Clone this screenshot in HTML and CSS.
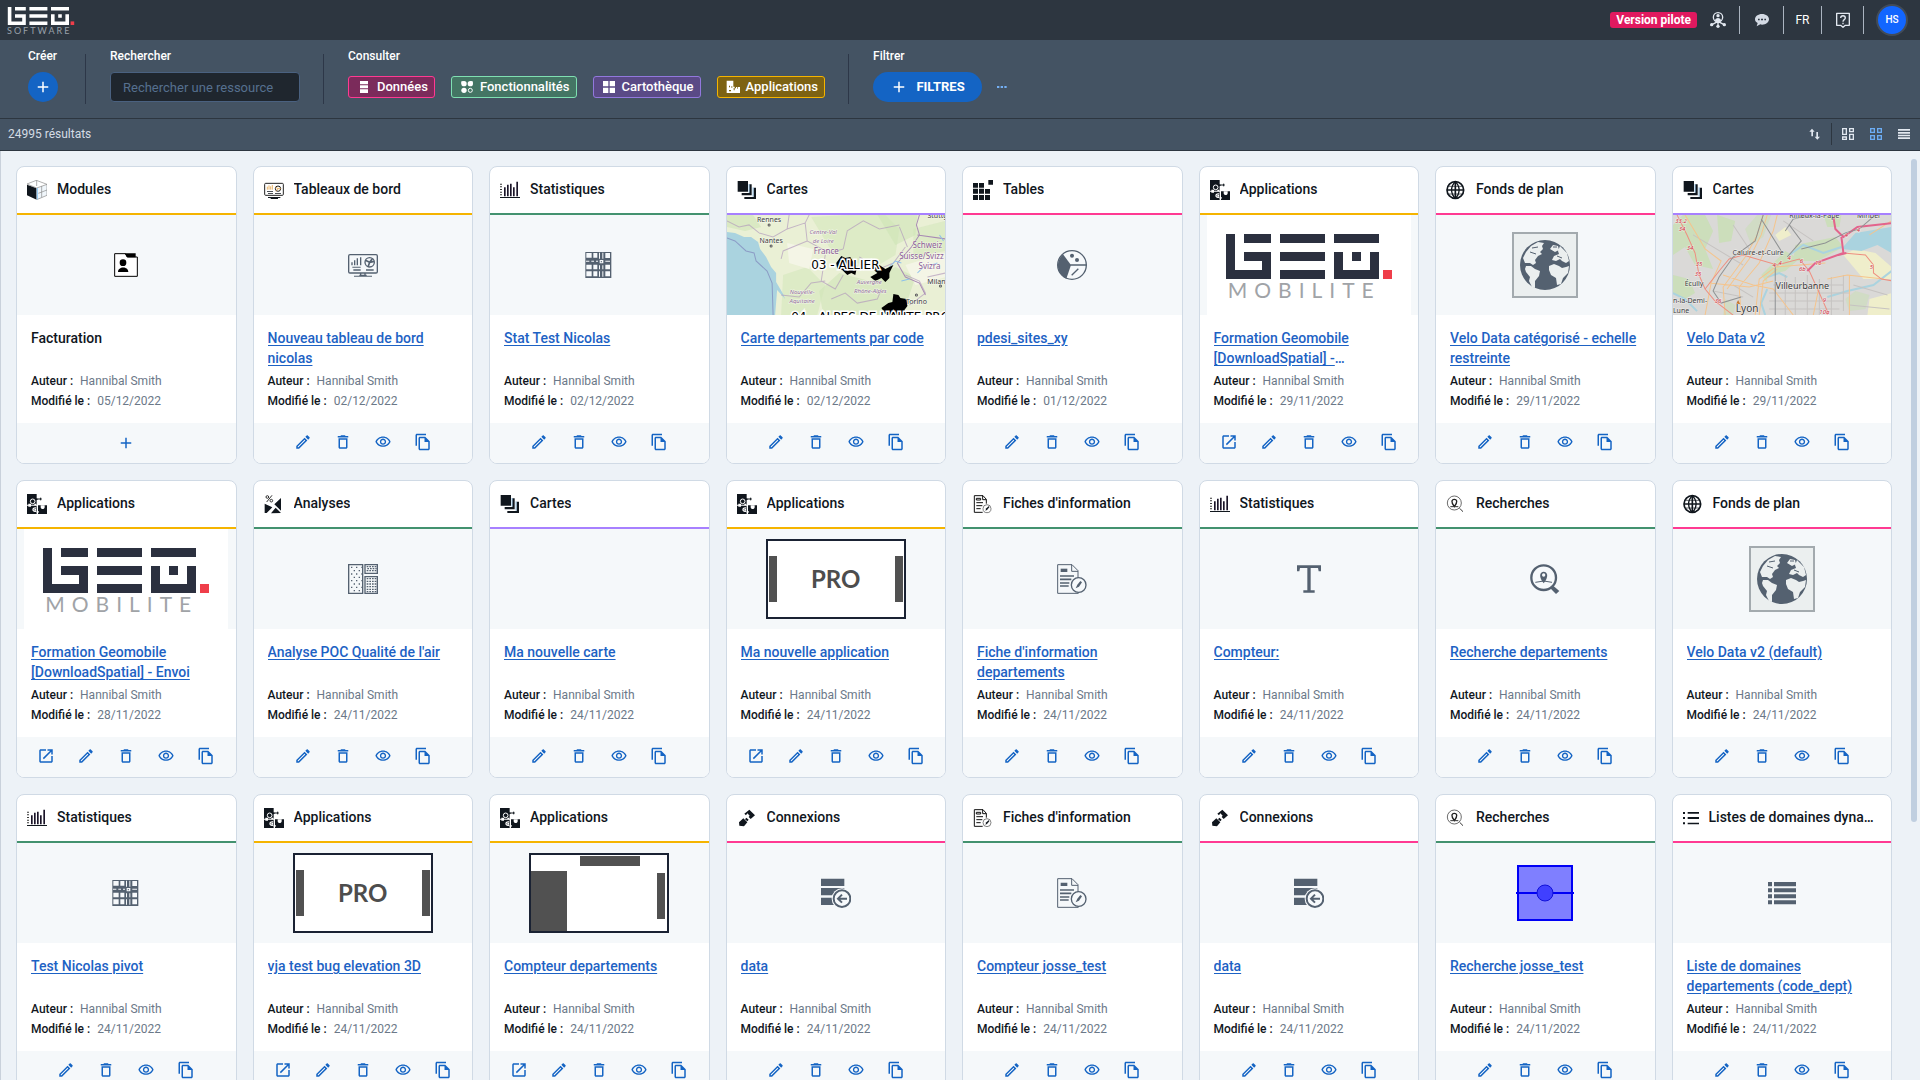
FILE: index.html
```html
<!DOCTYPE html>
<html lang="fr">
<head>
<meta charset="utf-8">
<meta name="viewport" content="width=device-width, initial-scale=1">
<title>GEO Software</title>
<link rel="stylesheet" href="styles.css">
</head>
<body>
<svg class="sprite" aria-hidden="true">
  <!-- brand -->
  <symbol id="geo" viewBox="0 0 166 45"><path fill="currentColor" d="M0 0h9v36h27v-9H18v-9h27v27H0zM18 0h27v9H18zM54 0h45v9H54zM54 18h45v9H54zM54 36h45v9H54zM108 0h45v9h-45zM108 18h9v18h27V18h9v27h-45zM126 18h9v9h-9z"/><path fill="#ef3e4a" d="M157 36h9v9h-9z"/></symbol>
  <!-- actions -->
  <symbol id="plus" viewBox="0 0 24 24"><path d="M19 13h-6v6h-2v-6H5v-2h6V5h2v6h6z"/></symbol>
  <symbol id="edit" viewBox="0 0 24 24"><path d="M14.06 9.02l.92.92L5.92 19H5v-.92l9.06-9.06M17.66 3c-.25 0-.51.1-.7.29l-1.83 1.83 3.75 3.75 1.83-1.83c.39-.39.39-1.02 0-1.41l-2.34-2.34c-.2-.2-.45-.29-.71-.29zm-3.6 3.19L3 17.25V21h3.75L17.81 9.94l-3.75-3.75z"/></symbol>
  <symbol id="trash" viewBox="0 0 24 24"><path d="M6 19c0 1.1.9 2 2 2h8c1.1 0 2-.9 2-2V7H6v12zM8 9h8v10H8V9zm7.5-5l-1-1h-5l-1 1H5v2h14V4z"/></symbol>
  <symbol id="eye" viewBox="-1 -1 26 26"><path d="M12 6c3.79 0 7.17 2.13 8.82 5.5C19.17 14.87 15.79 17 12 17s-7.17-2.13-8.82-5.5C4.83 8.13 8.21 6 12 6m0-2C7 4 2.73 7.11 1 11.5 2.73 15.89 7 19 12 19s9.27-3.11 11-7.5C21.27 7.11 17 4 12 4zm0 5c1.38 0 2.5 1.12 2.5 2.5S13.38 14 12 14s-2.5-1.12-2.5-2.5S10.62 9 12 9m0-2c-2.48 0-4.5 2.02-4.5 4.5S9.52 16 12 16s4.5-2.02 4.5-4.5S14.48 7 12 7z"/></symbol>
  <symbol id="copy" viewBox="0 0 24 24"><path d="M16 1H4c-1.1 0-2 .9-2 2v14h2V3h12V1zm-1 4H8c-1.1 0-1.99.9-1.99 2L6 21c0 1.1.89 2 1.99 2H19c1.1 0 2-.9 2-2V11l-6-6zM8 21V7h6v5h5v9H8z"/></symbol>
  <symbol id="open" viewBox="0 0 24 24"><path d="M19 19H5V5h7V3H5c-1.11 0-2 .9-2 2v14c0 1.1.89 2 2 2h14c1.1 0 2-.9 2-2v-7h-2v7zM14 3v2h3.59l-9.83 9.83 1.41 1.41L19 6.41V10h2V3h-7z"/></symbol>
  <!-- card types -->
  <symbol id="t-module" viewBox="0 0 60 60"><path d="M0 14l29 11v34L0 46z"/><path d="M29 24l31-10v32L29 60z" fill="#f0f6fb"/><path d="M0 12L28 1l32 12v33L29 59M29 24l31-11M29 24L0 12M29 0v18M44 18v34M34 40l26-10" fill="none" stroke="#888" stroke-width="2"/><path d="M31 24v34" stroke="#8cc8f5" stroke-width="3"/></symbol>
  <symbol id="t-board" viewBox="0 0 60 60"><rect x="2" y="10" width="56" height="36" rx="3" fill="none" stroke="#222" stroke-width="3"/><path d="M10 29V20M15 29V16M20 29V19M25 29V15" stroke="#e09020" stroke-width="2"/><path d="M9 33h18v2H9zM12 39h15v2H12zM33 39h18v2H33zM12 51h37v3H12zM20 54h22v3H20z"/><circle cx="42" cy="26" r="8" fill="none" stroke="#222" stroke-width="3"/><path d="M42 26l-8-5M42 26h9M42 26l-6 8" stroke="#e09020" stroke-width="2"/></symbol>
  <symbol id="t-stat" viewBox="0 0 60 60"><path d="M0 51h60v3H0z"/><path d="M3 11v38" stroke="#111" stroke-width="5" stroke-dasharray="3 5"/><path d="M12 22h5v27h-5zM21 14h5v35h-5zM30 11h5v38h-5zM39 22h5v27h-5zM49 5h5v44h-5z" fill="#1a1428"/></symbol>
  <symbol id="t-layers" viewBox="0 0 60 60"><path d="M2 3h31v32H2zM37 13h7v33H14v-7h23zM50 23h7v34H22v-6h28z"/><path d="M36 12v26M48 22v28" stroke="#6aaede" stroke-width="2"/></symbol>
  <symbol id="t-table" viewBox="0 0 60 60"><path d="M0 9h15v14H0zM18 9h15v14H18zM0 26h15v15H0zM18 26h15v15H18zM36 27h15v14H36zM0 45h15v15H0zM18 45h15v15H18zM36 45h15v15H36zM46 0h14v14H46z"/></symbol>
  <symbol id="t-app" viewBox="0 0 60 60"><path d="M0 0h29v13l4 3-4 3v13H0zM0 35h29v25H0zM33 34h27v26H33z"/><path d="M29 15h15M41 11v8" stroke="#10161d" stroke-width="3"/><circle cx="17" cy="22" r="7" fill="none" stroke="#fff" stroke-width="3"/><path d="M4 29h8v9H4zM22 29h6v5h-6zM41 34h12v6c0 7-12 7-12 0zM29 51h6v5h-6z" fill="#fff"/><path d="M27 42c-12-3-12 13 0 9M27 47h-5" fill="none" stroke="#fff" stroke-width="4"/></symbol>
  <symbol id="t-globe" viewBox="0 0 60 60"><g fill="none" stroke="#10161d" stroke-width="4"><circle cx="28" cy="30" r="25" stroke-width="5"/><path d="M3 30h50M28 5v50" stroke-width="5"/><path d="M28 5c-15 14-15 36 0 50M28 5c15 14 15 36 0 50"/><path d="M8 19h40M8 42h40" stroke-width="2"/></g></symbol>
  <symbol id="t-analysis" viewBox="0 0 60 60"><path d="M2 29l23 11-17 17H2zM21 58l14-17 16 16zM51 12v38L31 31z"/><path d="M24 4L8 24" stroke="#333" stroke-width="3"/><circle cx="10" cy="9" r="4" fill="none" stroke="#333" stroke-width="3"/><circle cx="22" cy="20" r="4" fill="none" stroke="#333" stroke-width="3"/></symbol>
  <symbol id="t-sheet" viewBox="0 0 60 60"><path d="M30 5H4v50h25M30 5l10 11v13M29 5v12h11M10 13h13v5H10z" fill="none" stroke="#111" stroke-width="3"/><path d="M10 26h20M10 35h18M10 44h13" stroke="#111" stroke-width="3"/><circle cx="42" cy="44" r="12" fill="#fff" stroke="#444" stroke-width="2"/><path d="M37 50l3-7 8-7 1 4-7 8z"/></symbol>
  <symbol id="t-link" viewBox="0 0 60 60"><path d="M22 17L37 5l17 17-13 11-6-6 3-4-7-7-4 6zM19 31l12 12-10 12-14-2-1-10zM28 29l7 6-4 5-7-6z"/></symbol>
  <symbol id="t-search" viewBox="0 0 60 60"><circle cx="25" cy="27" r="21" fill="none" stroke="#222" stroke-width="2"/><path d="M25 38c-11-14-8-22 0-22s11 8 0 22z" fill="none" stroke="#222" stroke-width="4"/><path d="M13 38h24M41 43l10 10" stroke="#333" stroke-width="3"/></symbol>
  <symbol id="t-list" viewBox="0 0 48 48"><path d="M0 6h6v6H0zM0 21h6v6H0zM0 37h6v6H0zM14 6h34v5H14zM14 21h34v6H14zM14 38h34v5H14z"/></symbol>
  <!-- preview glyphs -->
  <symbol id="p-folder" viewBox="0 0 72 72"><path d="M0 0h32l7 12h33v60H0z" fill="#fff"/><path d="M32 1h33v12H39zM27 19a10 10 0 1 1 0 20a10 10 0 1 1 0-20zM12 57c0-18 31-18 31 0z"/><path d="M2 2h32l6 10h30v58H2z" fill="none" stroke="#000" stroke-width="3"/></symbol>
  <symbol id="p-board" viewBox="0 0 90 90"><rect x="2" y="14" width="86" height="55" rx="4" fill="none" stroke="currentColor" stroke-width="4"/><path d="M10 37h4v9h-4zM18 31h4v15h-4zM26 25h4v21h-4zM36 22h4v24h-4zM13 50h25v3H13zM16 58h22v4H16zM54 58h23v4H54zM36 69h4v6h-4zM49 69h4v6h-4zM34 74h22v4H34zM18 77h54v3H18z"/><circle cx="65" cy="37" r="14" fill="none" stroke="currentColor" stroke-width="4"/><path d="M65 37l-13-6M65 37l13-3M65 37l-5 14M65 37l8-11" stroke="currentColor" stroke-width="5"/></symbol>
  <symbol id="p-pivot" viewBox="-4 -6 90 90"><path d="M0 0h78v78H0z"/><path fill="#f6f9fb" d="M3 3h16v14H3zM24 3h12v14H24zM60 3h14v15H60zM41 2h3v18h-3zM51 2h3v18h-3zM3 38h16v14H3zM24 38h12v14H24zM60 38h14v14H60zM3 58h16v15H3zM24 58h12v15H24zM60 58h14v15H60zM43 24h11v10H43zM2 26h10v3H2zM18 26h8v3h-8zM32 26h6v3h-6zM60 26h14v3H60zM41 40h3v12h-3zM51 40h3v12h-3zM41 58h3v16h-3zM51 58h3v16h-3z"/><circle cx="48" cy="29" r="2"/></symbol>
  <symbol id="p-pie" viewBox="0 0 90 90"><circle cx="45" cy="45" r="43" fill="#f6f9fb" stroke="currentColor" stroke-width="4"/><path d="M18 13L42 45 28 86A44 44 0 0 1 18 13z"/><path d="M40 45h48M44 76l20-20" stroke="currentColor" stroke-width="4"/><circle cx="45" cy="17" r="6"/><circle cx="60" cy="30" r="6"/></symbol>
  <symbol id="p-earth" viewBox="0 0 66 66"><rect x="1" y="1" width="64" height="64" fill="#ebefef" stroke="#a3aaae" stroke-width="2"/><circle cx="33" cy="33" r="25" fill="#546170"/><path fill="#ebefef" d="M14 20l5-6 7-4 6 1-2 3 1 3-3 3 2 2-4 2-3 4 1 3-3 2-3-2-5 0-2-5zM14 34l5 0 4 3 5 2-1 5-4 5 0 7-3-1-3-6 1-4-4-5-1-3zM38 17l3-4 5 1 1 4-4 2zM48 14l7 7 2 8-3 2-4-2-2-2-4 2-4-1 2-4 5-2-1-3zM37 34l5-2 5 2 3 2 4-1 3-1-1 7-5 5-2 6-4 1-1-7-5-3-2-5z"/><path d="M20 16l6-1M18 20l6 2M45 24l5 2M41 15h4" stroke="#546170" stroke-width="1"/></symbol>
  <symbol id="p-patterns" viewBox="0 0 90 90"><g fill="none" stroke="currentColor" stroke-width="4"><path d="M2 2h42v86H2zM51 2h37v26H51zM51 38h37v50H51z"/><path d="M9 10h32M17 20h24M9 30h32M17 40h24M9 50h32M17 60h24M9 70h32M17 80h24" stroke-dasharray="4 11"/><path d="M56 8h30M58 14h28M56 20h30M56 44h30M56 52h30M56 60h30M56 68h30M56 76h30M56 83h30" stroke-dasharray="5 3"/></g></symbol>
  <symbol id="p-sheet" viewBox="0 0 90 90"><g fill="none" stroke="currentColor" stroke-width="3"><path d="M45 2H2v86h62V40M45 2l18 18v22M44 2v20h19"/><path d="M9 36h42M9 46h34M9 57h28M9 66h26" stroke-width="5"/></g><path d="M11 14h20v10H11z"/><circle cx="65" cy="63" r="22" fill="#f6f9fb" stroke="currentColor" stroke-width="4"/><path d="M56 73l5-11 9-11 5 4-9 13z"/></symbol>
  <symbol id="p-text" viewBox="0 0 90 90"><path d="M9 4h72v18h-7l-2-10H50v67h12v7H28v-7h12V12H18l-2 10H9z"/></symbol>
  <symbol id="p-search" viewBox="0 0 90 90"><path d="M66 62l22 19-10 9-20-20z"/><circle cx="41" cy="41" r="37" fill="#f6f9fb" stroke="currentColor" stroke-width="7"/><path d="M41 58C25 38 29 23 41 23s16 15 0 35z"/><circle cx="41" cy="33" r="5" fill="#f6f9fb"/><path d="M16 55q26-8 50 0" fill="none" stroke="currentColor" stroke-width="3"/></symbol>
  <symbol id="p-source" viewBox="0 0 90 90"><path d="M0 2h70v22H0zM0 30h70v22H0zM0 59h40v22H0z"/><circle cx="63" cy="62" r="31" fill="#f6f9fb"/><circle cx="63" cy="62" r="25" fill="none" stroke="currentColor" stroke-width="6"/><path d="M78 62H52M63 50L51 62l12 12" fill="none" stroke="currentColor" stroke-width="6"/></symbol>
  <symbol id="p-shape" viewBox="0 0 58 58"><rect x="2" y="2" width="54" height="54" fill="#7f7fff" stroke="#0000f5" stroke-width="2"/><path d="M0 29h58" stroke="#0000f5" stroke-width="2"/><circle cx="29" cy="29" r="8" fill="#4040ff" stroke="#1010d8"/></symbol>
  <symbol id="p-list" viewBox="0 0 90 90"><path d="M3 12h12v13H3zM21 12h66v13H21zM3 31h12v12H3zM21 31h66v12H21zM3 49h12v12H3zM21 49h66v12H21zM3 67h12v12H3zM21 67h66v12H21z"/></symbol>
</svg>

<header class="topbar">
  <a class="brand" href="#" aria-label="GEO Software">
    <svg class="brand-mark"><use href="#geo"/></svg>
    <span class="brand-name">SOFTWARE</span>
  </a>
  <div class="topbar-tools">
    <span class="badge">Version pilote</span>
    <button class="tool tool-user" aria-label="Communauté"><svg class="i16" viewBox="0 0 48 48"><path d="M24 28L6 38M24 28l18 10M24 30v13" stroke="currentColor" stroke-width="4"/><circle cx="24" cy="16" r="14" fill="#2d3640" stroke="currentColor" stroke-width="4"/><circle cx="24" cy="11" r="5"/><path d="M15 26c0-11 18-11 18 0l-9 8z"/><circle cx="5" cy="38" r="5"/><circle cx="43" cy="38" r="5"/><circle cx="24" cy="43" r="5"/></svg></button>
    <button class="tool tool-chat" aria-label="Messages"><svg class="i14" viewBox="0 0 42 42"><path d="M21 3c12 0 21 7 21 16s-9 16-21 16l-5-1-11 6 3-10C3 28 0 24 0 19 0 10 9 3 21 3z"/><path d="M9 17h5v5H9zM18 17h6v5h-6zM28 17h5v5h-5z" fill="#2d3640"/></svg></button>
    <button class="tool tool-lang">FR</button>
    <button class="tool tool-help" aria-label="Aide"><svg class="i16" viewBox="0 0 48 48"><path d="M5 4h38v36H31l-7 6-7-6H5z" fill="none" stroke="currentColor" stroke-width="4" stroke-linejoin="round"/><path d="M17 18c0-9 14-9 14 0 0 5-7 5-7 11M24 32v5" fill="none" stroke="currentColor" stroke-width="4"/></svg></button>
    <button class="avatar">HS</button>
  </div>
</header>

<section class="toolbar">
  <div class="group group-new">
    <span class="group-title">Créer</span>
    <button class="round" aria-label="Créer"><svg class="i18"><use href="#plus"/></svg></button>
  </div>
  <div class="group">
    <label class="group-title" for="search">Rechercher</label>
    <input id="search" class="search" type="text" placeholder="Rechercher une ressource">
  </div>
  <div class="group">
    <span class="group-title">Consulter</span>
    <div class="chips">
      <button class="chip chip-data"><svg class="i16" viewBox="0 0 48 48"><path d="M12 6h24v10H12zM12 19h24v9H12zM12 31h24v11H12z"/></svg>Données</button>
      <button class="chip chip-func"><svg class="i16" viewBox="0 0 48 48"><circle cx="15" cy="14" r="8"/><circle cx="34" cy="14" r="8"/><circle cx="15" cy="34" r="8"/><path d="M7 7h7v7H7zM34 7h7v7h-7z"/><circle cx="34" cy="34" r="6" fill="none" stroke="currentColor" stroke-width="3"/></svg>Fonctionnalités</button>
      <button class="chip chip-map"><svg class="i16" viewBox="0 0 48 48"><path d="M6 6h16v16H6zM26 6h16v16H26zM6 26h16v16H6zM26 26h16v16H26z"/></svg>Cartothèque</button>
      <button class="chip chip-app"><svg class="i16" viewBox="0 0 48 48"><path d="M5 5h20v18h4v5h4v-4h4v5h2v-5h6v18H5z"/><path d="M12 20h3v5h-3zM19 22h3v4h-3zM12 33h6v4h-6zM26 27h3v7h-3z" fill="#7d6213"/></svg>Applications</button>
    </div>
  </div>
  <div class="group">
    <span class="group-title">Filtrer</span>
    <div class="filters">
      <button class="filter-btn"><svg class="i18"><use href="#plus"/></svg>FILTRES</button>
      <button class="more" aria-label="Plus"><svg class="i12" viewBox="0 0 36 36"><path d="M3 15h7v6H3zM14 15h7v6h-7zM25 15h7v6h-7z"/></svg></button>
    </div>
  </div>
</section>

<section class="results">
  <span>24995 résultats</span>
  <div class="views">
    <button class="view view-sort" aria-label="Trier"><svg class="i12" viewBox="0 0 36 36"><path d="M9 2l8 9h-5v14H7V11H1zM25 35l-8-9h5V12h5v14h6z"/></svg></button>
    <button class="view" aria-label="Mosaïque"><svg class="i12" viewBox="0 0 36 36"><path d="M2 2h11v17H2zM23 2h11v9H23zM23 19h11v15H23zM2 27h11v7H2z" fill="none" stroke="currentColor" stroke-width="4"/></svg></button>
    <button class="view view-on" aria-label="Grille"><svg class="i12" viewBox="0 0 36 36"><path d="M2 2h11v11H2zM23 2h11v11H23zM2 23h11v11H2zM23 23h11v11H23z" fill="none" stroke="currentColor" stroke-width="4"/></svg></button>
    <button class="view" aria-label="Liste"><svg class="i12" viewBox="0 0 36 36"><path d="M0 3h36v5H0zM0 12h36v5H0zM0 20h36v5H0zM0 28h36v5H0z"/></svg></button>
  </div>
</section>

<main class="content">
<div class="grid">

<article class="card gold">
  <h2 class="card-type"><svg><use href="#t-module"/></svg><span>Modules</span></h2>
  <div class="preview"><svg class="i24 black"><use href="#p-folder"/></svg></div>
  <div class="body"><h3 class="title">Facturation</h3><p><b>Auteur :</b>Hannibal Smith</p><p><b>Modifié le :</b>05/12/2022</p></div>
  <div class="actions actions-add"><button aria-label="Ajouter"><svg><use href="#plus"/></svg></button></div>
</article>

<article class="card gold">
  <h2 class="card-type"><svg><use href="#t-board"/></svg><span>Tableaux de bord</span></h2>
  <div class="preview"><svg class="i30"><use href="#p-board"/></svg></div>
  <div class="body"><h3 class="title"><a href="#">Nouveau tableau de bord nicolas</a></h3><p><b>Auteur :</b>Hannibal Smith</p><p><b>Modifié le :</b>02/12/2022</p></div>
  <div class="actions"><button aria-label="Modifier"><svg><use href="#edit"/></svg></button><button aria-label="Supprimer"><svg><use href="#trash"/></svg></button><button aria-label="Voir"><svg><use href="#eye"/></svg></button><button aria-label="Dupliquer"><svg><use href="#copy"/></svg></button></div>
</article>

<article class="card green">
  <h2 class="card-type"><svg><use href="#t-stat"/></svg><span>Statistiques</span></h2>
  <div class="preview"><svg class="i30"><use href="#p-pivot"/></svg></div>
  <div class="body"><h3 class="title"><a href="#">Stat Test Nicolas</a></h3><p><b>Auteur :</b>Hannibal Smith</p><p><b>Modifié le :</b>02/12/2022</p></div>
  <div class="actions"><button aria-label="Modifier"><svg><use href="#edit"/></svg></button><button aria-label="Supprimer"><svg><use href="#trash"/></svg></button><button aria-label="Voir"><svg><use href="#eye"/></svg></button><button aria-label="Dupliquer"><svg><use href="#copy"/></svg></button></div>
</article>

<article class="card purple">
  <h2 class="card-type"><svg><use href="#t-layers"/></svg><span>Cartes</span></h2>
  <div class="preview">
    <svg class="map" viewBox="0 0 218 100" preserveAspectRatio="xMidYMid slice">
      <rect width="218" height="100" fill="#eaf0d5"/>
      <g fill="#cfe5b8"><path d="M84 2l40-2 34 0 14 14-4 26-20 12-28-6-18-14z" opacity=".5"/><path d="M112 58l30 8 26-14 20 10-8 24-24 14H96l-4-24z" opacity=".6"/><path d="M0 0h26l8 12-16 4-18-4zM150 0h40l-2 20-20 10z" opacity=".6"/><path d="M56 60l24-8 18 18-8 30H54z" opacity=".5"/><path d="M186 14l32-8v30l-32 6z" opacity=".5"/></g>
      <g fill="#f4f5e6"><path d="M178 50l40-12v24l-30 8z"/><path d="M60 28l26 6-4 20-20-6z"/></g>
      <path d="M0 17l8 1 9 4 7 0 7 5 2 7 6 8 5 10 5 6 0 9 7 12 2 5-8-9-2 25H0z" fill="#aad3df"/>
      <g fill="none" stroke="#b49dbd" stroke-width="1" opacity=".7"><path d="M0 23l8 3 11 10 8 2 2 8 11 10 5 12 1 32" stroke="#7f86bb"/><path d="M0 6l12 6 10-2 10 8M32 18l14 4 14-8 2-14M60 14l18-6 4-8M78 8l2 18 22 12 14-4M80 26l-24 10-2 8M116 34l4-18 16-10 16 8 20-4M132 42l20 12 14-6 12-16M172 12l8 20M98 40l-4 26 14 8 8-14M54 80l18 2 12-14 14-2M104 84l14-6 12 10 20-4 4-10M178 60l14 6 6 12-16 12M200 62l18-4"/></g>
      <path d="M192 0l-3 10 3 10-8 12-14 16 8 14 14 6 6 12M190 20l28 4" stroke="#a98bb4" stroke-width="1" fill="none"/>
      <path d="M162 52l6-6 6 2M190 58l6-6M204 50l6-2M212 20l4 6M174 66l8-2" stroke="#8cc0ea" stroke-width="1" fill="none"/>
      <g fill="#000"><path d="M109 48l5-7 4 2 5-1 3 5 4 4-2 9-4-2-4 2-5-5-5-1z"/><path d="M143 62l7-4-6-5 8-3 6 4 8-4-4 8 0 5-4 4-4-4-6 3z"/><path d="M154 93l7-5 4-1 1-8 5 1 2 3 6 1 1 7-3 4 2 5h-20z"/></g>
      <g class="map-town" font-size="7"><text x="42" y="7">Rennes</text><text x="44" y="28">Nantes</text><text x="189" y="89">Torino</text><text x="209" y="69">Milan</text><text x="210" y="3">Stuttg</text></g>
      <g fill="#fff" stroke="#555"><circle cx="42" cy="10" r="1"/><circle cx="44" cy="31" r="1"/><circle cx="189" cy="80" r="1"/><circle cx="213" cy="71" r="1"/></g>
      <g class="map-region" font-size="6"><text x="96" y="19">Centre-Val</text><text x="96" y="28">de Loire</text><text x="142" y="69">Auvergne</text><text x="143" y="78">Rhône-Alpes</text><text x="75" y="79">Nouvelle-</text><text x="75" y="88">Aquitaine</text></g>
      <g class="map-country" font-size="8"><text x="99" y="39">France</text><text x="200" y="33">Schweiz</text><text x="194" y="44">Suisse/Svizz</text><text x="202" y="54">Svizra</text></g>
      <g class="map-dept" font-size="12"><text x="84" y="54">03 - ALLIER</text><text x="64" y="106">04 - ALPES DE HAUTE PROVENCE</text></g>
    </svg>
  </div>
  <div class="body"><h3 class="title"><a href="#">Carte departements par code</a></h3><p><b>Auteur :</b>Hannibal Smith</p><p><b>Modifié le :</b>02/12/2022</p></div>
  <div class="actions"><button aria-label="Modifier"><svg><use href="#edit"/></svg></button><button aria-label="Supprimer"><svg><use href="#trash"/></svg></button><button aria-label="Voir"><svg><use href="#eye"/></svg></button><button aria-label="Dupliquer"><svg><use href="#copy"/></svg></button></div>
</article>

<article class="card pink">
  <h2 class="card-type"><svg><use href="#t-table"/></svg><span>Tables</span></h2>
  <div class="preview"><svg class="i30"><use href="#p-pie"/></svg></div>
  <div class="body"><h3 class="title"><a href="#">pdesi_sites_xy</a></h3><p><b>Auteur :</b>Hannibal Smith</p><p><b>Modifié le :</b>01/12/2022</p></div>
  <div class="actions"><button aria-label="Modifier"><svg><use href="#edit"/></svg></button><button aria-label="Supprimer"><svg><use href="#trash"/></svg></button><button aria-label="Voir"><svg><use href="#eye"/></svg></button><button aria-label="Dupliquer"><svg><use href="#copy"/></svg></button></div>
</article>

<article class="card gold">
  <h2 class="card-type"><svg><use href="#t-app"/></svg><span>Applications</span></h2>
  <div class="preview"><div class="mobilite"><svg><use href="#geo"/></svg><span>MOBILITE</span></div></div>
  <div class="body"><h3 class="title"><a href="#">Formation Geomobile [DownloadSpatial] -</a><span class="ellipsis">…</span></h3><p><b>Auteur :</b>Hannibal Smith</p><p><b>Modifié le :</b>29/11/2022</p></div>
  <div class="actions"><button aria-label="Ouvrir"><svg><use href="#open"/></svg></button><button aria-label="Modifier"><svg><use href="#edit"/></svg></button><button aria-label="Supprimer"><svg><use href="#trash"/></svg></button><button aria-label="Voir"><svg><use href="#eye"/></svg></button><button aria-label="Dupliquer"><svg><use href="#copy"/></svg></button></div>
</article>

<article class="card pink">
  <h2 class="card-type"><svg><use href="#t-globe"/></svg><span>Fonds de plan</span></h2>
  <div class="preview"><svg class="i66"><use href="#p-earth"/></svg></div>
  <div class="body"><h3 class="title"><a href="#">Velo Data catégorisé - echelle restreinte</a></h3><p><b>Auteur :</b>Hannibal Smith</p><p><b>Modifié le :</b>29/11/2022</p></div>
  <div class="actions"><button aria-label="Modifier"><svg><use href="#edit"/></svg></button><button aria-label="Supprimer"><svg><use href="#trash"/></svg></button><button aria-label="Voir"><svg><use href="#eye"/></svg></button><button aria-label="Dupliquer"><svg><use href="#copy"/></svg></button></div>
</article>

<article class="card purple">
  <h2 class="card-type"><svg><use href="#t-layers"/></svg><span>Cartes</span></h2>
  <div class="preview">
    <svg class="map" viewBox="0 0 218 100" preserveAspectRatio="xMidYMid slice">
      <rect width="218" height="100" fill="#dad9d7"/>
      <g fill="#c8dfb4"><path d="M0 10l10-10h22l8 16-8 18 8 20-18-4-10-18L0 40zM44 0l18 6-4 20-12 2zM122 30l40-8 8 10-26 14-24 0zM112 36l14 8-14 12-18 4 0 8-6-8zM150 0h18l-2 12h-12zM0 60l16 4 6 14-10 6-12-6z" opacity=".8"/><path d="M72 14l12-14 14 0-8 22-12 8zM52 84l10 6-2 10H50zM172 84l10-8 14 4-4 14-16 2z" opacity=".5"/></g>
      <g fill="#efeecb"><path d="M102 20l10-8 6 8-12 6zM186 46l18 4-4 12-14-4zM170 40l12-6 20 4 16 14v12l-28 0zM196 84l22-6v22h-24z"/></g>
      <g fill="#aad3df"><path d="M182 18l36-6v26l-14-8-16 6-20-2z"/></g>
      <path d="M218 56l-18 14-26 6-20 6M0 78l12 6 12 12M116 40l14-10 20 8 18-6M94 74l-6 14 4 12M94 62l12-4 8 4" fill="none" stroke="#aad3df" stroke-width="2"/>
      <g fill="none" stroke="#c6c3c1" stroke-width="1"><path d="M100 70h70M96 78h80M96 86h74M96 94h70M112 60v40M122 62v38M134 60v40M146 64v36M158 62v38M170 60v36M60 70l20 12M40 76l30 6M180 70l34 10M176 90l40 4M60 10l20 30M20 20l50 30M110 6l30 20"/></g>
      <g fill="none" stroke="#f5c48c" stroke-width="1"><path d="M12 0l12 20 8 14 16 12-10 22-6 32M90 0l-6 20-12 22-22 30 2 28M94 0l-6 20-12 24-22 30M104 0l-4 16-14 32-20 24 2 28M50 60l30 10 20 4 20 26M82 100l4-36 16-12 50-4M86 100l4-34 14-12M154 64l20-4 36 4M176 60v40M36 68l40 4 24-6M140 100l6-30M196 20l22-14"/></g>
      <g fill="none" stroke="#ee8f80" stroke-width="1"><path d="M4 0l10 20 8 18 4 22 6 14 10 12 18 14M32 74l14-18 10-12 14-4 34 10 22-6 10 12 10 22 8 18v12M170 38l22 2 8 10 0 8 8 6 12 2"/></g>
      <g fill="none" stroke="#e3648c" stroke-width="2"><path d="M160 2l2 12 8 8 14-10 36-4M168 22l2 16-28 10-8 8M165 40l8-2"/></g>
      <g fill="none" stroke="#8f9293" stroke-width="1"><path d="M90 0l-8 26-22 16-14 20-6 14 8 12 20-6M128 34l24-6 20-10 14-4 16-14M88 4l20 32M116 10l12 16-14 16M140 0l-20 4-8 12M102 50v50"/></g>
      <path d="M63 89l2-4 2 4z" fill="#c87830"/>
      <g class="map-town" font-size="7"><text x="85" y="40">Caluire-et-Cuire</text><text x="21" y="71">Écully</text><text x="17" y="88">n-la-Demi-</text><text x="8" y="98">Lune</text><text x="141" y="3">Rillieux-la-Pape</text><text x="195" y="3">Miribel</text></g>
      <g class="map-town" font-size="9"><text x="129" y="74">Villeurbanne</text></g>
      <g class="map-town" font-size="10"><text x="74" y="97">Lyon</text></g>
      <g class="map-exit" font-size="6"><text x="8" y="8">33.2</text><text x="9" y="16">34</text><text x="17" y="35">34</text><text x="26" y="51">35</text><text x="25" y="61">35</text><text x="45" y="88">36</text><text x="101" y="52">4</text><text x="107" y="50">4</text><text x="116" y="45">4</text><text x="128" y="48">6</text><text x="129" y="56">6b</text><text x="145" y="50">16</text><text x="173" y="22">4</text><text x="185" y="17">4</text><text x="198" y="54">5</text><text x="151" y="87">9</text><text x="151" y="99">10a</text></g>
    </svg>
  </div>
  <div class="body"><h3 class="title"><a href="#">Velo Data v2</a></h3><p><b>Auteur :</b>Hannibal Smith</p><p><b>Modifié le :</b>29/11/2022</p></div>
  <div class="actions"><button aria-label="Modifier"><svg><use href="#edit"/></svg></button><button aria-label="Supprimer"><svg><use href="#trash"/></svg></button><button aria-label="Voir"><svg><use href="#eye"/></svg></button><button aria-label="Dupliquer"><svg><use href="#copy"/></svg></button></div>
</article>

<article class="card gold">
  <h2 class="card-type"><svg><use href="#t-app"/></svg><span>Applications</span></h2>
  <div class="preview"><div class="mobilite"><svg><use href="#geo"/></svg><span>MOBILITE</span></div></div>
  <div class="body"><h3 class="title"><a href="#">Formation Geomobile [DownloadSpatial] - Envoi</a></h3><p><b>Auteur :</b>Hannibal Smith</p><p><b>Modifié le :</b>28/11/2022</p></div>
  <div class="actions"><button aria-label="Ouvrir"><svg><use href="#open"/></svg></button><button aria-label="Modifier"><svg><use href="#edit"/></svg></button><button aria-label="Supprimer"><svg><use href="#trash"/></svg></button><button aria-label="Voir"><svg><use href="#eye"/></svg></button><button aria-label="Dupliquer"><svg><use href="#copy"/></svg></button></div>
</article>

<article class="card green">
  <h2 class="card-type"><svg><use href="#t-analysis"/></svg><span>Analyses</span></h2>
  <div class="preview"><svg class="i30"><use href="#p-patterns"/></svg></div>
  <div class="body"><h3 class="title"><a href="#">Analyse POC Qualité de l'air</a></h3><p><b>Auteur :</b>Hannibal Smith</p><p><b>Modifié le :</b>24/11/2022</p></div>
  <div class="actions"><button aria-label="Modifier"><svg><use href="#edit"/></svg></button><button aria-label="Supprimer"><svg><use href="#trash"/></svg></button><button aria-label="Voir"><svg><use href="#eye"/></svg></button><button aria-label="Dupliquer"><svg><use href="#copy"/></svg></button></div>
</article>

<article class="card purple">
  <h2 class="card-type"><svg><use href="#t-layers"/></svg><span>Cartes</span></h2>
  <div class="preview"></div>
  <div class="body"><h3 class="title"><a href="#">Ma nouvelle carte</a></h3><p><b>Auteur :</b>Hannibal Smith</p><p><b>Modifié le :</b>24/11/2022</p></div>
  <div class="actions"><button aria-label="Modifier"><svg><use href="#edit"/></svg></button><button aria-label="Supprimer"><svg><use href="#trash"/></svg></button><button aria-label="Voir"><svg><use href="#eye"/></svg></button><button aria-label="Dupliquer"><svg><use href="#copy"/></svg></button></div>
</article>

<article class="card gold">
  <h2 class="card-type"><svg><use href="#t-app"/></svg><span>Applications</span></h2>
  <div class="preview"><div class="frame frame-pro"><i></i><span>PRO</span><i></i></div></div>
  <div class="body"><h3 class="title"><a href="#">Ma nouvelle application</a></h3><p><b>Auteur :</b>Hannibal Smith</p><p><b>Modifié le :</b>24/11/2022</p></div>
  <div class="actions"><button aria-label="Ouvrir"><svg><use href="#open"/></svg></button><button aria-label="Modifier"><svg><use href="#edit"/></svg></button><button aria-label="Supprimer"><svg><use href="#trash"/></svg></button><button aria-label="Voir"><svg><use href="#eye"/></svg></button><button aria-label="Dupliquer"><svg><use href="#copy"/></svg></button></div>
</article>

<article class="card green">
  <h2 class="card-type"><svg><use href="#t-sheet"/></svg><span>Fiches d'information</span></h2>
  <div class="preview"><svg class="i30"><use href="#p-sheet"/></svg></div>
  <div class="body"><h3 class="title"><a href="#">Fiche d'information departements</a></h3><p><b>Auteur :</b>Hannibal Smith</p><p><b>Modifié le :</b>24/11/2022</p></div>
  <div class="actions"><button aria-label="Modifier"><svg><use href="#edit"/></svg></button><button aria-label="Supprimer"><svg><use href="#trash"/></svg></button><button aria-label="Voir"><svg><use href="#eye"/></svg></button><button aria-label="Dupliquer"><svg><use href="#copy"/></svg></button></div>
</article>

<article class="card green">
  <h2 class="card-type"><svg><use href="#t-stat"/></svg><span>Statistiques</span></h2>
  <div class="preview"><svg class="i30"><use href="#p-text"/></svg></div>
  <div class="body"><h3 class="title"><a href="#">Compteur:</a></h3><p><b>Auteur :</b>Hannibal Smith</p><p><b>Modifié le :</b>24/11/2022</p></div>
  <div class="actions"><button aria-label="Modifier"><svg><use href="#edit"/></svg></button><button aria-label="Supprimer"><svg><use href="#trash"/></svg></button><button aria-label="Voir"><svg><use href="#eye"/></svg></button><button aria-label="Dupliquer"><svg><use href="#copy"/></svg></button></div>
</article>

<article class="card green">
  <h2 class="card-type"><svg><use href="#t-search"/></svg><span>Recherches</span></h2>
  <div class="preview"><svg class="i30"><use href="#p-search"/></svg></div>
  <div class="body"><h3 class="title"><a href="#">Recherche departements</a></h3><p><b>Auteur :</b>Hannibal Smith</p><p><b>Modifié le :</b>24/11/2022</p></div>
  <div class="actions"><button aria-label="Modifier"><svg><use href="#edit"/></svg></button><button aria-label="Supprimer"><svg><use href="#trash"/></svg></button><button aria-label="Voir"><svg><use href="#eye"/></svg></button><button aria-label="Dupliquer"><svg><use href="#copy"/></svg></button></div>
</article>

<article class="card pink">
  <h2 class="card-type"><svg><use href="#t-globe"/></svg><span>Fonds de plan</span></h2>
  <div class="preview"><svg class="i66"><use href="#p-earth"/></svg></div>
  <div class="body"><h3 class="title"><a href="#">Velo Data v2 (default)</a></h3><p><b>Auteur :</b>Hannibal Smith</p><p><b>Modifié le :</b>24/11/2022</p></div>
  <div class="actions"><button aria-label="Modifier"><svg><use href="#edit"/></svg></button><button aria-label="Supprimer"><svg><use href="#trash"/></svg></button><button aria-label="Voir"><svg><use href="#eye"/></svg></button><button aria-label="Dupliquer"><svg><use href="#copy"/></svg></button></div>
</article>

<article class="card green">
  <h2 class="card-type"><svg><use href="#t-stat"/></svg><span>Statistiques</span></h2>
  <div class="preview"><svg class="i30"><use href="#p-pivot"/></svg></div>
  <div class="body"><h3 class="title"><a href="#">Test Nicolas pivot</a></h3><p><b>Auteur :</b>Hannibal Smith</p><p><b>Modifié le :</b>24/11/2022</p></div>
  <div class="actions"><button aria-label="Modifier"><svg><use href="#edit"/></svg></button><button aria-label="Supprimer"><svg><use href="#trash"/></svg></button><button aria-label="Voir"><svg><use href="#eye"/></svg></button><button aria-label="Dupliquer"><svg><use href="#copy"/></svg></button></div>
</article>

<article class="card gold">
  <h2 class="card-type"><svg><use href="#t-app"/></svg><span>Applications</span></h2>
  <div class="preview"><div class="frame frame-pro"><i></i><span>PRO</span><i></i></div></div>
  <div class="body"><h3 class="title"><a href="#">vja test bug elevation 3D</a></h3><p><b>Auteur :</b>Hannibal Smith</p><p><b>Modifié le :</b>24/11/2022</p></div>
  <div class="actions"><button aria-label="Ouvrir"><svg><use href="#open"/></svg></button><button aria-label="Modifier"><svg><use href="#edit"/></svg></button><button aria-label="Supprimer"><svg><use href="#trash"/></svg></button><button aria-label="Voir"><svg><use href="#eye"/></svg></button><button aria-label="Dupliquer"><svg><use href="#copy"/></svg></button></div>
</article>

<article class="card gold">
  <h2 class="card-type"><svg><use href="#t-app"/></svg><span>Applications</span></h2>
  <div class="preview"><div class="frame"><svg viewBox="0 0 136 76"><path fill="#515151" d="M49 1h60v10H49zM0 16h36v60H0zM126 18h8v46h-8z"/></svg></div></div>
  <div class="body"><h3 class="title"><a href="#">Compteur departements</a></h3><p><b>Auteur :</b>Hannibal Smith</p><p><b>Modifié le :</b>24/11/2022</p></div>
  <div class="actions"><button aria-label="Ouvrir"><svg><use href="#open"/></svg></button><button aria-label="Modifier"><svg><use href="#edit"/></svg></button><button aria-label="Supprimer"><svg><use href="#trash"/></svg></button><button aria-label="Voir"><svg><use href="#eye"/></svg></button><button aria-label="Dupliquer"><svg><use href="#copy"/></svg></button></div>
</article>

<article class="card pink">
  <h2 class="card-type"><svg><use href="#t-link"/></svg><span>Connexions</span></h2>
  <div class="preview"><svg class="i30"><use href="#p-source"/></svg></div>
  <div class="body"><h3 class="title"><a href="#">data</a></h3><p><b>Auteur :</b>Hannibal Smith</p><p><b>Modifié le :</b>24/11/2022</p></div>
  <div class="actions"><button aria-label="Modifier"><svg><use href="#edit"/></svg></button><button aria-label="Supprimer"><svg><use href="#trash"/></svg></button><button aria-label="Voir"><svg><use href="#eye"/></svg></button><button aria-label="Dupliquer"><svg><use href="#copy"/></svg></button></div>
</article>

<article class="card green">
  <h2 class="card-type"><svg><use href="#t-sheet"/></svg><span>Fiches d'information</span></h2>
  <div class="preview"><svg class="i30"><use href="#p-sheet"/></svg></div>
  <div class="body"><h3 class="title"><a href="#">Compteur josse_test</a></h3><p><b>Auteur :</b>Hannibal Smith</p><p><b>Modifié le :</b>24/11/2022</p></div>
  <div class="actions"><button aria-label="Modifier"><svg><use href="#edit"/></svg></button><button aria-label="Supprimer"><svg><use href="#trash"/></svg></button><button aria-label="Voir"><svg><use href="#eye"/></svg></button><button aria-label="Dupliquer"><svg><use href="#copy"/></svg></button></div>
</article>

<article class="card pink">
  <h2 class="card-type"><svg><use href="#t-link"/></svg><span>Connexions</span></h2>
  <div class="preview"><svg class="i30"><use href="#p-source"/></svg></div>
  <div class="body"><h3 class="title"><a href="#">data</a></h3><p><b>Auteur :</b>Hannibal Smith</p><p><b>Modifié le :</b>24/11/2022</p></div>
  <div class="actions"><button aria-label="Modifier"><svg><use href="#edit"/></svg></button><button aria-label="Supprimer"><svg><use href="#trash"/></svg></button><button aria-label="Voir"><svg><use href="#eye"/></svg></button><button aria-label="Dupliquer"><svg><use href="#copy"/></svg></button></div>
</article>

<article class="card green">
  <h2 class="card-type"><svg><use href="#t-search"/></svg><span>Recherches</span></h2>
  <div class="preview"><svg class="i58"><use href="#p-shape"/></svg></div>
  <div class="body"><h3 class="title"><a href="#">Recherche josse_test</a></h3><p><b>Auteur :</b>Hannibal Smith</p><p><b>Modifié le :</b>24/11/2022</p></div>
  <div class="actions"><button aria-label="Modifier"><svg><use href="#edit"/></svg></button><button aria-label="Supprimer"><svg><use href="#trash"/></svg></button><button aria-label="Voir"><svg><use href="#eye"/></svg></button><button aria-label="Dupliquer"><svg><use href="#copy"/></svg></button></div>
</article>

<article class="card pink">
  <h2 class="card-type card-type-list"><svg><use href="#t-list"/></svg><span>Listes de domaines dynamiques</span></h2>
  <div class="preview"><svg class="i30"><use href="#p-list"/></svg></div>
  <div class="body"><h3 class="title"><a href="#">Liste de domaines departements (code_dept)</a></h3><p><b>Auteur :</b>Hannibal Smith</p><p><b>Modifié le :</b>24/11/2022</p></div>
  <div class="actions"><button aria-label="Modifier"><svg><use href="#edit"/></svg></button><button aria-label="Supprimer"><svg><use href="#trash"/></svg></button><button aria-label="Voir"><svg><use href="#eye"/></svg></button><button aria-label="Dupliquer"><svg><use href="#copy"/></svg></button></div>
</article>

</div>
<div class="scrollbar"><div class="thumb"></div></div>
</main>
</body>
</html>
```
FILE: styles.css
```css
* { box-sizing: border-box; }

body {
  margin: 0;
  height: 100vh;
  display: flex;
  flex-direction: column;
  overflow: hidden;
  background: #edf2f7;
  color: #10161d;
  font: 400 12px/20px Roboto, "Liberation Sans", sans-serif;
}

h2, h3, p { margin: 0; }

button {
  display: flex;
  align-items: center;
  justify-content: center;
  padding: 0;
  border: 0;
  background: none;
  color: inherit;
  font: inherit;
  cursor: pointer;
}

svg { display: block; flex: none; fill: currentColor; }
.sprite { position: absolute; width: 0; height: 0; }

.i12 { width: 12px; height: 12px; }
.i14 { width: 14px; height: 14px; }
.i16 { width: 16px; height: 16px; }
.i18 { width: 18px; height: 18px; }
.i24 { width: 24px; height: 24px; }
.i30 { width: 30px; height: 30px; }
.i58 { width: 58px; height: 58px; }
.i66 { width: 66px; height: 66px; }

/* Top bar */
.topbar {
  flex: none;
  display: flex;
  justify-content: space-between;
  height: 40px;
  padding: 0 12px 0 7px;
  background: #2d3640;
  color: #fff;
}
.brand { padding-top: 7px; color: #fff; text-decoration: none; }
.brand-mark { width: 68px; height: 18px; }
.brand-name { display: block; font: 400 9px/12px Lato, sans-serif; letter-spacing: 2px; color: #99a1aa; }
.topbar-tools { display: flex; align-items: center; height: 40px; color: #e2e8f0; }
.badge {
  height: 16px;
  margin-right: 13px;
  padding: 0 6px;
  border-radius: 3px;
  background: #e0195f;
  color: #fff;
  font-weight: 700;
  line-height: 16px;
}
.tool { height: 28px; border-right: 1px solid #aab4c0; }
.tool-user { width: 30px; padding-right: 13px; }
.tool-chat { width: 44px; color: #d3dae4; }
.tool-lang { width: 38px; color: #fff; }
.tool-help { width: 42px; }
.avatar {
  width: 32px;
  height: 32px;
  margin-left: 12px;
  border: 2px solid #434c57;
  border-radius: 50%;
  background: #1266ff;
  color: #fff;
  font-size: 10px;
  font-weight: 500;
}

/* Toolbar */
.toolbar {
  flex: none;
  display: flex;
  align-items: flex-start;
  height: 78px;
  padding: 6px 28px 0;
  background: #445363;
  color: #fff;
}
.group { position: relative; padding-right: 48px; }
.group::after {
  content: "";
  position: absolute;
  top: 8px;
  right: 24px;
  width: 1px;
  height: 50px;
  background: #2d3748;
}
.group:last-child::after { display: none; }
.group-new { width: 82px; }
.group-title { display: block; height: 26px; font-weight: 500; }
.round { width: 30px; height: 30px; border-radius: 50%; background: #1464c4; }
.search {
  display: block;
  width: 190px;
  height: 30px;
  padding: 0 12px;
  border: 1px solid #4a6180;
  border-radius: 4px;
  background: #1f262e;
  color: #fff;
  font: 400 13px/20px Roboto, sans-serif;
}
.search::placeholder { color: #56708f; }
.chips { display: flex; gap: 16px; padding-top: 4px; }
.chip {
  gap: 5px;
  height: 22px;
  padding: 0 6px 0 7px;
  border: 1px solid var(--line);
  border-radius: 3px;
  background: var(--fill);
  font-size: 13px;
  font-weight: 500;
}
.chip-data { --line: #ff3a92; --fill: #7b2b5b; }
.chip-func { --line: #7fe0b2; --fill: #447564; }
.chip-map { --line: #9278dd; --fill: #5a4a86; }
.chip-app { --line: #f5b400; --fill: #7d6213; }
.filters { display: flex; gap: 14px; }
.filter-btn {
  gap: 8px;
  width: 109px;
  height: 30px;
  border-radius: 15px;
  background: #1464c4;
  font-size: 13px;
  font-weight: 700;
}
.more { color: #74b0f5; }

/* Results bar */
.results {
  flex: none;
  display: flex;
  align-items: center;
  justify-content: space-between;
  height: 33px;
  padding: 0 10px 2px 8px;
  border-top: 1px solid #2d3640;
  border-bottom: 1px solid #2d3640;
  background: #445363;
  color: #d5dce5;
}
.views { display: flex; align-items: center; gap: 16px; color: #e2e8f0; }
.view { height: 22px; }
.view-sort { margin-right: -6px; padding-right: 10px; border-right: 1px solid #2d3640; }
.view-on { color: #6cadf5; }

/* Cards */
.content {
  flex: 1;
  min-height: 0;
  display: flex;
  align-items: flex-start;
  border-left: 1px solid #c9d1db;
}
.grid {
  flex: 1;
  min-width: 0;
  display: grid;
  grid-template-columns: repeat(8, minmax(0, 1fr));
  gap: 16px;
  padding: 15px 19px 16px 15px;
}
.scrollbar { flex: none; align-self: stretch; width: 6px; margin: 8px 3px 0 0; }
.thumb { height: 72%; border-radius: 3px; background: #c0cfe0; }

.card {
  overflow: hidden;
  border: 1px solid #d0dae5;
  border-radius: 8px;
  background: #fff;
}
.gold { --accent: #f5b400; }
.green { --accent: #43926f; }
.purple { --accent: #a780ff; }
.pink { --accent: #ff3a92; }

.card-type {
  display: flex;
  align-items: center;
  gap: 10px;
  height: 48px;
  padding: 0 16px 0 10px;
  border-bottom: 2px solid var(--accent);
  font-size: 14px;
  font-weight: 500;
}
.card-type svg { width: 20px; height: 20px; }
.card-type-list svg { width: 16px; }
.card-type span { padding-bottom: 2px; overflow: hidden; white-space: nowrap; text-overflow: ellipsis; }

.preview {
  display: flex;
  align-items: center;
  justify-content: center;
  height: 100px;
  background: #f5f8fa;
  color: #546170;
}
.preview .black { color: #000; }

.body { padding: 13px 14px 12px; }
.title { height: 40px; margin-bottom: 3px; font-size: 14px; font-weight: 500; overflow: hidden; }
.title a, .ellipsis { color: #1d62c4; text-underline-offset: 2px; }
.body p { color: #6b7888; }
.body b { margin-right: 7px; color: #10161d; font-weight: 500; }

.actions {
  display: flex;
  justify-content: center;
  height: 40px;
  padding-bottom: 3px;
  background: #f5f8fa;
  color: #1464c4;
}
.actions-add { padding-bottom: 0; }
.actions button { width: 40px; }
.actions svg { width: 18px; height: 18px; }

/* Preview artwork */
.mobilite { width: 204px; height: 100px; padding: 19px 0 0 19px; background: #fff; color: #2b303f; }
.mobilite svg { width: 166px; height: 45px; }
.mobilite span { display: block; padding-left: 2px; font: 400 21px/22px Lato, sans-serif; letter-spacing: 7px; color: #a0a3a7; }
.frame { width: 140px; height: 80px; border: 2px solid #1a2233; background: #fff; }
.frame svg { width: 136px; height: 76px; }
.frame-pro { display: flex; align-items: center; justify-content: space-between; padding: 0 1px; }
.frame-pro i { width: 8px; height: 46px; background: #515151; }
.frame-pro span { font: 700 24px/28px Lato, sans-serif; color: #4d4d4d; }

.map { width: 100%; height: 100px; }
.map text { stroke: #fff; stroke-width: 1px; stroke-opacity: .6; paint-order: stroke; text-anchor: middle; font-family: "Noto Sans", sans-serif; }
.map-town { fill: #3a3a3a; }
.map-region { fill: #94709c; font-style: italic; }
.map-country { fill: #8a5c94; }
.map-exit { fill: #d03040; font-style: italic; }
.map .map-dept text { fill: #000; font-family: "DejaVu Sans", sans-serif; text-anchor: start; stroke-width: 3px; stroke-opacity: 1; }
```
